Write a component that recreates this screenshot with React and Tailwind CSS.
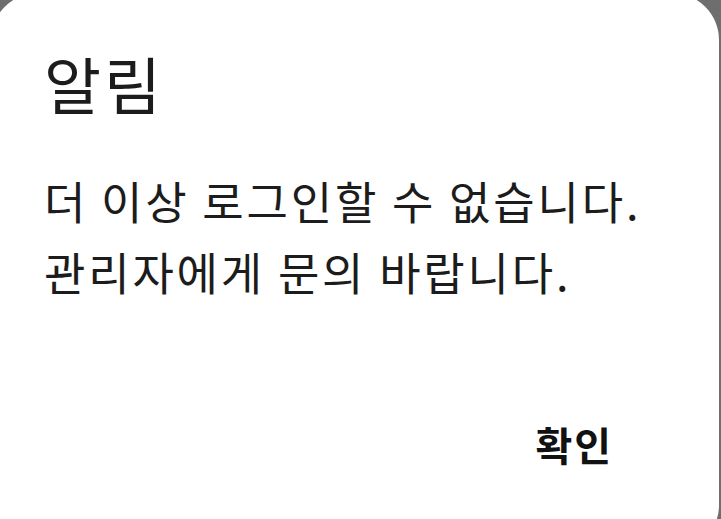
export default function App() {
  return (
    <div className="w-[721px] h-[519px] overflow-hidden bg-[#6e6e6e]">
      <div
        className="ml-[-9px] mt-[-7px] w-[728px] h-[559px] rounded-[47px] bg-white flex flex-col pl-[53px] pr-[40px] text-[#1c1c1c]"
        style={{ fontFamily: '"Noto Sans CJK KR", "Noto Sans", sans-serif' }}
      >
        <div className="pt-[52px] text-[62px] leading-[76px] tracking-[3px]">알림</div>
        <div className="mt-[44px] text-[45px] leading-[71px] tracking-[2.8px] whitespace-nowrap">
          <div>더 이상 로그인할 수 없습니다.</div>
          <div>관리자에게 문의 바랍니다.</div>
        </div>
        <div className="mt-[112px] flex justify-end pr-[66px]">
          <button className="text-[40px] font-bold leading-[50px] tracking-[2px] text-[#111]">확인</button>
        </div>
      </div>
    </div>
  );
}
